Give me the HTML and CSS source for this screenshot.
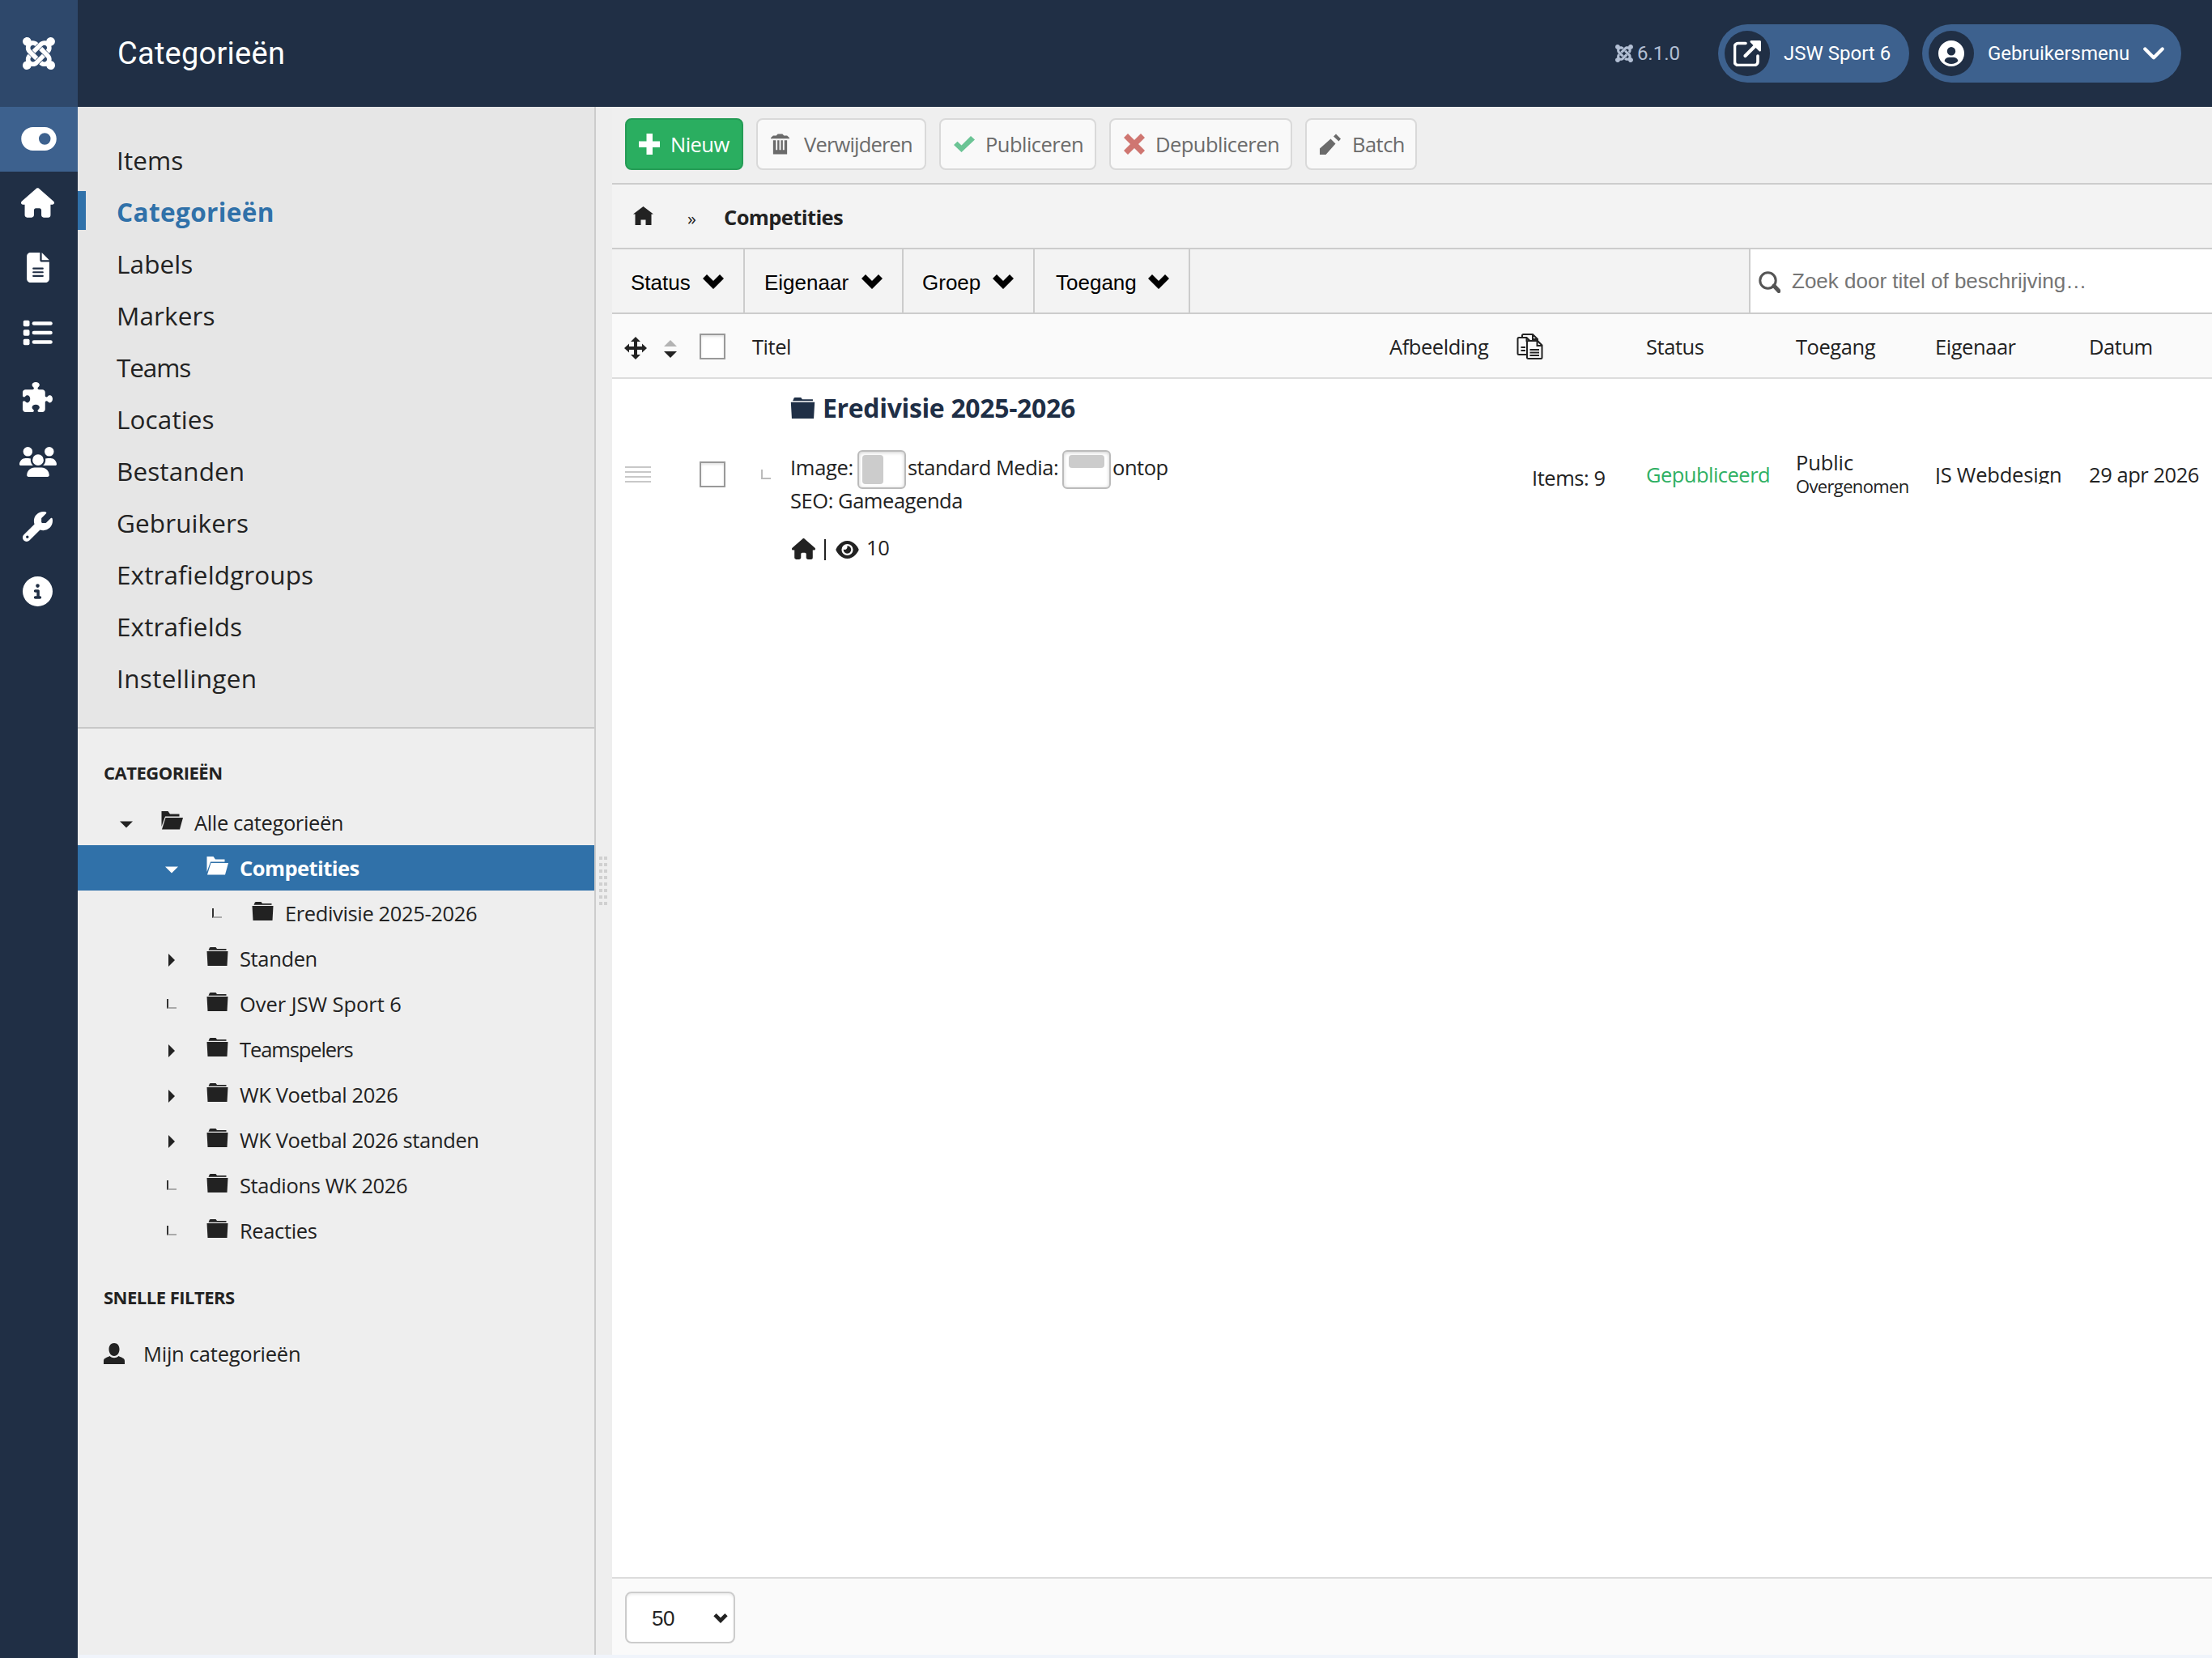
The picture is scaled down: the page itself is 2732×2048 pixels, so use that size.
FILE: index.html
```html
<!DOCTYPE html>
<html lang="nl">
<head>
<meta charset="utf-8">
<title>Categorieën</title>
<link rel="stylesheet" href="styles.css">
</head>
<body>
<svg class="sprite" aria-hidden="true">
  <symbol id="joomla" viewBox="0 32 448 448"><path d="M.6 92.1C.6 58.8 27.4 32 60.4 32c30 0 54.5 21.9 59.2 50.2 32.6-7.6 67.1 .6 96.5 30l-44.3 44.3c-20.5-20.5-42.6-16.3-55.4-3.5-14.3 14.3-14.3 37.9 0 52.2l99.5 99.5-44 44.3c-87.7-87.2-49.7-49.7-99.8-99.7-26.8-26.5-35-64.8-24.8-98.9C20.4 144.6 .6 120.7 .6 92.1zm129.5 116.4l44.3 44.3c10-10 89.7-89.7 99.7-99.8 14.3-14.3 37.6-14.3 51.9 0 12.8 12.8 17 35-3.5 55.4l44 44.3c31.2-31.2 38.5-67.6 28.9-101.2 29.2-4.1 51.9-29.2 51.9-59.5 0-33.2-26.8-60.1-59.8-60.1-30.3 0-55.4 22.5-59.5 51.6-33.8-9.9-71.7-1.5-98.3 25.1-18.3 19.1-71.1 71.5-99.6 99.9zm266.3 152.2c8.2-32.7-.9-68.5-26.3-93.9-11.8-12.2 5 4.7-99.5-99.7l-44.3 44.3 99.7 99.7c14.3 14.3 14.3 37.6 0 51.9-12.8 12.8-35 17-55.4-3.5l-44 44.3c27.6 30.2 68 38.8 102.7 28 5.5 27.4 29.7 48.1 58.9 48.1 33 0 59.8-26.8 59.8-60.1 0-30.2-22.5-55-51.6-59.1zm-84.3-53.1l-44-44.3c-87 86.4-50.4 50.4-99.7 99.8-14.3 14.3-37.6 14.3-51.9 0-13.1-13.4-16.9-35.3 3.2-55.4l-44-44.3c-30.2 30.2-38 65.2-29.5 98.3-26.7 6-46.2 29.9-46.2 58.2C0 453.2 26.8 480 59.8 480c28.6 0 52.5-19.8 58.6-46.7 32.7 8.2 68.5-.6 94.2-26 32.1-32 12.2-12.4 99.5-99.7z"/></symbol>
  <symbol id="toggle" viewBox="0 64 576 384"><path d="M192 64C86 64 0 150 0 256S86 448 192 448l192 0c106 0 192-86 192-192s-86-192-192-192L192 64zm192 96a96 96 0 1 1 0 192 96 96 0 1 1 0-192z"/></symbol>
  <symbol id="house" viewBox="0 0 576 512"><path d="M575.8 255.5c0 18-15 32.1-32 32.1l-32 0 .7 160.2c0 2.7-.2 5.4-.5 8.1l0 16.2c0 22.1-17.9 40-40 40l-16 0c-1.1 0-2.2 0-3.3-.1c-1.4 .1-2.8 .1-4.2 .1L416 512l-24 0c-22.1 0-40-17.9-40-40l0-24 0-64c0-17.7-14.3-32-32-32l-64 0c-17.7 0-32 14.3-32 32l0 64 0 24c0 22.1-17.9 40-40 40l-24 0-31.9 0c-1.5 0-3-.1-4.5-.2c-1.2 .1-2.4 .2-3.6 .2l-16 0c-22.1 0-40-17.9-40-40l0-112c0-.9 0-1.9 .1-2.8l0-69.7-32 0c-18 0-32-14-32-32.1c0-9 3-17 10-24L266.4 8c7-7 15-8 22-8s15 2 21 7L564.8 231.5c8 7 12 15 11 24z"/></symbol>
  <symbol id="file" viewBox="0 0 384 512"><path d="M64 0C28.7 0 0 28.7 0 64V448c0 35.3 28.7 64 64 64h256c35.3 0 64-28.7 64-64V160H256c-17.7 0-32-14.3-32-32V0zM256 0v128h128z"/><path class="cut" d="M112 272h160M112 336h160M112 400h160"/></symbol>
  <symbol id="list" viewBox="0 32 512 448"><rect x="8" y="42" width="108" height="104" rx="24"/><rect x="8" y="204" width="108" height="104" rx="24"/><rect x="8" y="366" width="108" height="104" rx="24"/><rect x="160" y="62" width="352" height="64" rx="32"/><rect x="160" y="224" width="352" height="64" rx="32"/><rect x="160" y="386" width="352" height="64" rx="32"/></symbol>
  <symbol id="puzzle" viewBox="0 0 512 512"><path d="M192 104.8c0-9.200-5.800-17.300-13.200-22.800C167.2 73.3 160 61.3 160 48c0-26.500 28.700-48 64-48s64 21.500 64 48c0 13.300-7.200 25.300-18.800 34c-7.400 5.500-13.200 13.600-13.200 22.800c0 12.800 10.400 23.200 23.200 23.200l56.800 0c26.500 0 48 21.500 48 48l0 56.800c0 12.800 10.400 23.200 23.200 23.200c9.200 0 17.300-5.800 22.800-13.200c8.700-11.600 20.700-18.800 34-18.800c26.500 0 48 28.700 48 64s-21.500 64-48 64c-13.300 0-25.300-7.200-34-18.800c-5.500-7.400-13.600-13.200-22.800-13.200c-12.800 0-23.200 10.400-23.200 23.200L384 464c0 26.500-21.500 48-48 48l-56.800 0c-12.800 0-23.200-10.400-23.200-23.200c0-9.200 5.800-17.300 13.200-22.800c11.600-8.700 18.800-20.700 18.800-34c0-26.500-28.700-48-64-48s-64 21.500-64 48c0 13.300 7.200 25.300 18.800 34c7.400 5.500 13.200 13.600 13.200 22.800c0 12.800-10.400 23.200-23.200 23.200L48 512c-26.500 0-48-21.500-48-48L0 343.200C0 330.400 10.400 320 23.200 320c9.200 0 17.300 5.800 22.800 13.200C54.700 344.800 66.700 352 80 352c26.500 0 48-28.700 48-64s-21.500-64-48-64c-13.300 0-25.300 7.200-34 18.800C40.500 250.200 32.400 256 23.200 256C10.400 256 0 245.600 0 232.800L0 176c0-26.500 21.500-48 48-48l120.800 0c12.800 0 23.200-10.400 23.200-23.200z"/></symbol>
  <symbol id="users" viewBox="0 0 640 512"><path d="M144 0a80 80 0 1 1 0 160A80 80 0 1 1 144 0zM512 0a80 80 0 1 1 0 160A80 80 0 1 1 512 0zM0 298.7C0 239.8 47.8 192 106.7 192l42.7 0c15.9 0 31 3.5 44.6 9.7c-1.3 7.2-1.9 14.7-1.9 22.3c0 38.2 16.8 72.5 43.3 96c-.2 0-.4 0-.7 0L21.3 320C9.6 320 0 310.4 0 298.7zM405.3 320c-.2 0-.4 0-.7 0c26.6-23.5 43.3-57.8 43.3-96c0-7.6-.7-15-1.9-22.3c13.6-6.3 28.7-9.7 44.6-9.7l42.7 0C592.2 192 640 239.8 640 298.7c0 11.8-9.6 21.3-21.3 21.3l-213.3 0zM224 224a96 96 0 1 1 192 0 96 96 0 1 1 -192 0zM128 485.3C128 411.7 187.7 352 261.3 352l117.3 0C452.3 352 512 411.7 512 485.3c0 14.7-11.9 26.7-26.7 26.7l-330.7 0c-14.7 0-26.7-11.9-26.7-26.7z"/></symbol>
  <symbol id="wrench" viewBox="0 0 512 512"><path d="M352 320c88.4 0 160-71.6 160-160c0-15.3-2.2-30.1-6.2-44.2c-3.1-10.8-16.4-13.2-24.3-5.3l-76.8 76.8c-3 3-7.1 4.7-11.3 4.7L336 192c-8.8 0-16-7.2-16-16l0-57.4c0-4.2 1.7-8.3 4.7-11.3l76.8-76.8c7.9-7.9 5.4-21.2-5.3-24.3C382.1 2.2 367.3 0 352 0C263.6 0 192 71.6 192 160c0 19.1 3.4 37.5 9.5 54.5L19.9 396.1C7.2 408.8 0 426.1 0 444.1C0 481.6 30.4 512 67.9 512c18 0 35.3-7.2 48-19.9L297.5 310.5c17 6.2 35.4 9.5 54.5 9.5zM80 408a24 24 0 1 1 0 48 24 24 0 1 1 0-48z"/></symbol>
  <symbol id="info" viewBox="0 0 512 512"><path d="M256 512A256 256 0 1 0 256 0a256 256 0 1 0 0 512zM216 336l24 0 0-64-24 0c-13.3 0-24-10.7-24-24s10.7-24 24-24l48 0c13.3 0 24 10.7 24 24l0 88 8 0c13.3 0 24 10.7 24 24s-10.7 24-24 24l-80 0c-13.3 0-24-10.7-24-24s10.7-24 24-24zm40-208a32 32 0 1 1 0 64 32 32 0 1 1 0-64z"/></symbol>
  <symbol id="eye" viewBox="0 32 576 448"><path d="M288 32c-80.800 0-145.500 36.800-192.600 80.600C48.600 156 17.300 208 2.500 243.700c-3.300 7.900-3.300 16.700 0 24.600C17.300 304 48.600 356 95.400 399.400C142.500 443.200 207.200 480 288 480s145.500-36.800 192.600-80.600c46.800-43.500 78.100-95.400 93-131.100c3.300-7.900 3.300-16.700 0-24.600c-14.900-35.700-46.200-87.700-93-131.100C433.500 68.800 368.800 32 288 32zM144 256a144 144 0 1 1 288 0 144 144 0 1 1 -288 0zm144-64c0 35.300-28.700 64-64 64c-7.100 0-13.900-1.200-20.300-3.300c-5.500-1.800-11.900 1.600-11.700 7.400c.3 6.900 1.300 13.800 3.200 20.700c13.700 51.200 66.400 81.600 117.600 67.900s81.600-66.400 67.900-117.600c-11.100-41.500-47.800-69.400-88.600-71.100c-5.800-.2-9.200 6.100-7.400 11.700c2.100 6.400 3.300 13.200 3.300 20.300z"/></symbol>
  <symbol id="external" viewBox="0 0 34 32"><path d="M15 3.500H5.500a4 4 0 0 0-4 4V26.500a4 4 0 0 0 4 4H26a4 4 0 0 0 4-4V19" fill="none" stroke="currentColor" stroke-width="3.600" stroke-linecap="round"/><path d="M14.500 19 29 4.500" fill="none" stroke="currentColor" stroke-width="4.200" stroke-linecap="round"/><path d="M22 0H32.500a1.500 1.500 0 0 1 1.500 1.500V12c0 1.500-1.500 2-2.500 1L21 2.500C20 1.500 20.500 0 22 0z"/></symbol>
  <symbol id="account" viewBox="0 0 32 32"><path fill-rule="evenodd" d="M16 0a16 16 0 1 1 0 32 16 16 0 1 1 0-32zM16 8a5 5 0 1 0 0 10.400 5 5 0 1 0 0-10.400zM7.500 25.200a11.500 11.500 0 0 0 17 0C23.500 22 21 20.800 18.500 20.800h-5C11 20.800 8.500 22 7.500 25.200z"/></symbol>
  <symbol id="angle" viewBox="0 0 26 16"><path d="M2.300 2.500 13 13.200 23.700 2.500" fill="none" stroke="currentColor" stroke-width="4.200" stroke-linecap="round" stroke-linejoin="round"/></symbol>
  <symbol id="chevron" viewBox="0 0 26 18"><path d="M0 5 5 0 13 8 21 0 26 5 13 18z"/></symbol>
  <symbol id="plus" viewBox="0 0 26 26"><path d="M9.500 0h7.500v9.500h9.500v7.500H17V26H9.500V17H0V9.500h9.500z"/></symbol>
  <symbol id="trash" viewBox="0 0 24 26"><path fill-rule="evenodd" d="M7 2 9 0h6l2 2h4l3 2.800V6H0V4.800L3 2zM3 8h3.500v12.500h2V8h2.500v12.500h2V8h2.500v12.500h2V8H21v18H3z"/></symbol>
  <symbol id="check" viewBox="0 0 26 20"><path d="M0 11 4.500 6.800 9.500 11.500 21 0 26 4.500 9.500 20z"/></symbol>
  <symbol id="cross" viewBox="0 0 26 26"><path d="M5 0 13 8 21 0 26 5 18 13 26 21 21 26 13 18 5 26 0 21 8 13 0 5z"/></symbol>
  <symbol id="pencil" viewBox="0 0 26 26"><path d="M0 26v-7.500L13.500 6.500 19.500 12.500 7.500 26zM17 3.500 20 .5 26 6.500 23.500 9.500z"/></symbol>
  <symbol id="home-solid" viewBox="0 0 25 23"><path d="M12.500 0 25 9.500h-2.500V23h-7v-6.500h-6V23h-7V9.500H0z"/></symbol>
  <symbol id="search" viewBox="0 0 27 27"><circle cx="11.500" cy="11.500" r="9.700" fill="none" stroke="currentColor" stroke-width="3"/><path d="M19 18 25 24.500" stroke="currentColor" stroke-width="5" stroke-linecap="round"/></symbol>
  <symbol id="move" viewBox="0 0 28 28"><path d="M14 0 20 6H16v6h6V8.500l6 5.500-6 5.500V16h-6v6h4l-6 6-6-6h4v-6H6v3.500L0 14 6 8.500V12h6V6H8z"/></symbol>
  <symbol id="sort" viewBox="0 0 16 22"><path d="M8 0 16 8H0z" fill="#b3b3b3"/><path d="M8 22 0 14h16z"/></symbol>
  <symbol id="copy" viewBox="0 0 33 32"><g fill="none" stroke="currentColor" stroke-width="2"><path d="M13 26H3Q1.500 26 1.500 24.500V6.500Q1.500 5 3 5H12.500l4 4M7 5V2.500Q7 1 8.500 1H20l6 6v2M12.500 5v5M20 1v6h6M14.500 9H26l5.500 5.500V29.500Q31.500 31 30 31H15Q13 31 13 29.500V10.500Q13 9 14.500 9zM25.500 9v6h6"/><path d="M5.500 17H11M5.500 21H11M16.500 20H28M16.500 23.500H28M16.500 27H28"/></g></symbol>
  <symbol id="folder" viewBox="0 0 26 23"><path d="M3 1.500Q3 0 4.500 0h6.500l1.500 2H24v1.800H2zM0 5h26l-1 18H1z"/></symbol>
  <symbol id="folder-open" viewBox="0 0 26 23"><path d="M0 0H8l2.500 3.500H22V6.500H4.500L0 19z"/><path d="M5 8H26.500L22.500 22.500H.5z"/></symbol>
  <symbol id="down" viewBox="0 0 16 8"><path d="M0 0h16L8 8z"/></symbol>
  <symbol id="right" viewBox="0 0 8 16"><path d="M0 0 8 8 0 16z"/></symbol>
  <symbol id="person" viewBox="0 0 26 26"><path d="M13 0c4 0 6.500 3 6.500 7.500S17 16 13 16 6.500 12 6.500 7.500 9 0 13 0zM0 26v-4c0-3.500 4-4 7.500-6 1.500 1.600 3.500 2.200 5.500 2.200s4-.6 5.500-2.200c3.500 2 7.500 2.500 7.500 6v4z"/></symbol>
</svg>

<div class="app">
  <nav class="rail">
    <a class="rail-logo"><svg class="i-logo"><use href="#joomla"/></svg></a>
    <a class="rail-item active"><svg class="i-toggle"><use href="#toggle"/></svg></a>
    <a class="rail-item"><svg class="i-house"><use href="#house"/></svg></a>
    <a class="rail-item"><svg class="i-file"><use href="#file"/></svg></a>
    <a class="rail-item"><svg class="i-list"><use href="#list"/></svg></a>
    <a class="rail-item"><svg class="i-sq"><use href="#puzzle"/></svg></a>
    <a class="rail-item"><svg class="i-users"><use href="#users"/></svg></a>
    <a class="rail-item"><svg class="i-sq"><use href="#wrench"/></svg></a>
    <a class="rail-item"><svg class="i-sq"><use href="#info"/></svg></a>
  </nav>

  <div class="page">
    <header class="header">
      <h1 class="page-title">Categorieën</h1>
      <div class="version"><svg><use href="#joomla"/></svg><span>6.1.0</span></div>
      <a class="pill pill-site"><span class="pill-icon"><svg class="i-ext"><use href="#external"/></svg></span><span>JSW Sport 6</span></a>
      <a class="pill pill-user"><span class="pill-icon"><svg class="i-acc"><use href="#account"/></svg></span><span>Gebruikersmenu</span><svg class="i-angle"><use href="#angle"/></svg></a>
    </header>

    <div class="body">
      <aside class="sidebar">
        <ul class="menu">
          <li>Items</li>
          <li class="current">Categorieën</li>
          <li>Labels</li>
          <li>Markers</li>
          <li class="kern">Teams</li>
          <li>Locaties</li>
          <li>Bestanden</li>
          <li>Gebruikers</li>
          <li>Extrafieldgroups</li>
          <li>Extrafields</li>
          <li class="wide">Instellingen</li>
        </ul>
        <h2 class="side-title">Categorieën</h2>
        <ul class="tree">
          <li class="l1"><span class="mark"><svg class="down"><use href="#down"/></svg></span><svg class="folder"><use href="#folder-open"/></svg><span>Alle categorieën</span></li>
          <li class="l2 selected"><span class="mark"><svg class="down"><use href="#down"/></svg></span><svg class="folder"><use href="#folder-open"/></svg><span>Competities</span></li>
          <li class="l3"><span class="mark"><i class="leaf"></i></span><svg class="folder"><use href="#folder"/></svg><span>Eredivisie 2025-2026</span></li>
          <li class="l2"><span class="mark"><svg class="right"><use href="#right"/></svg></span><svg class="folder"><use href="#folder"/></svg><span>Standen</span></li>
          <li class="l2"><span class="mark"><i class="leaf"></i></span><svg class="folder"><use href="#folder"/></svg><span class="loose">Over JSW Sport 6</span></li>
          <li class="l2"><span class="mark"><svg class="right"><use href="#right"/></svg></span><svg class="folder"><use href="#folder"/></svg><span class="kern">Teamspelers</span></li>
          <li class="l2"><span class="mark"><svg class="right"><use href="#right"/></svg></span><svg class="folder"><use href="#folder"/></svg><span>WK Voetbal 2026</span></li>
          <li class="l2"><span class="mark"><svg class="right"><use href="#right"/></svg></span><svg class="folder"><use href="#folder"/></svg><span>WK Voetbal 2026 standen</span></li>
          <li class="l2"><span class="mark"><i class="leaf"></i></span><svg class="folder"><use href="#folder"/></svg><span>Stadions WK 2026</span></li>
          <li class="l2"><span class="mark"><i class="leaf"></i></span><svg class="folder"><use href="#folder"/></svg><span>Reacties</span></li>
        </ul>
        <h2 class="side-title">Snelle filters</h2>
        <div class="quick"><svg><use href="#person"/></svg><span>Mijn categorieën</span></div>
      </aside>
      <div class="splitter"><div class="grip"></div></div>

      <main class="main">
        <div class="toolbar">
          <button class="btn btn-new"><svg class="s26"><use href="#plus"/></svg>Nieuw</button>
          <button class="btn btn-del"><svg class="i-trash"><use href="#trash"/></svg>Verwijderen</button>
          <button class="btn btn-pub"><svg class="i-check"><use href="#check"/></svg>Publiceren</button>
          <button class="btn btn-unpub"><svg class="s26"><use href="#cross"/></svg>Depubliceren</button>
          <button class="btn btn-batch"><svg class="s26"><use href="#pencil"/></svg>Batch</button>
        </div>
        <div class="crumbs"><svg><use href="#home-solid"/></svg><span class="sep">»</span><strong>Competities</strong></div>
        <div class="filters">
          <button class="filter w-status">Status<svg><use href="#chevron"/></svg></button>
          <button class="filter w-owner">Eigenaar<svg><use href="#chevron"/></svg></button>
          <button class="filter w-group">Groep<svg><use href="#chevron"/></svg></button>
          <button class="filter w-access">Toegang<svg><use href="#chevron"/></svg></button>
          <div class="search"><svg><use href="#search"/></svg><span>Zoek door titel of beschrijving…</span></div>
        </div>
        <div class="grid thead">
          <div class="order"><svg class="i-move"><use href="#move"/></svg><svg class="i-sort"><use href="#sort"/></svg></div>
          <div><span class="checkbox"></span></div>
          <div>Titel</div>
          <div>Afbeelding</div>
          <div><svg class="i-copy"><use href="#copy"/></svg></div>
          <div>Status</div>
          <div>Toegang</div>
          <div>Eigenaar</div>
          <div>Datum</div>
        </div>
        <div class="grid row">
          <div><span class="handle"></span></div>
          <div><span class="checkbox"></span></div>
          <div class="title-cell">
            <i class="leaf pale"></i>
            <div class="details">
              <div class="name"><svg><use href="#folder"/></svg><span>Eredivisie 2025-2026</span></div>
              <div class="layout-line"><span>Image:</span><i class="thumb"><b class="block side"></b></i><span>standard Media:</span><i class="thumb"><b class="block top"></b></i><span>ontop</span></div>
              <div class="seo">SEO: Gameagenda</div>
              <div class="stats"><svg class="st-home"><use href="#house"/></svg><i class="bar"></i><svg class="st-eye"><use href="#eye"/></svg><span>10</span></div>
            </div>
          </div>
          <div></div>
          <div class="count">Items: 9</div>
          <div class="published">Gepubliceerd</div>
          <div class="access"><span>Public</span><small>Overgenomen</small></div>
          <div><span class="owner">JS Webdesign</span></div>
          <div>29 apr 2026</div>
        </div>
        <div class="pager"><div class="select"><span>50</span><svg><use href="#chevron"/></svg></div></div>
      </main>
    </div>
  </div>
</div>
</body>
</html>
```
FILE: styles.css
```css
* { box-sizing: border-box; }

body {
  margin: 0;
  background: #f0f4fb;
  color: #222;
  font: 25.5px/36px "Open Sans", "Noto Sans", sans-serif;
  letter-spacing: -0.45px;
}

ul, h1, h2 { margin: 0; padding: 0; list-style: none; }
svg { fill: currentColor; flex: none; display: block; overflow: visible; }
.sprite { position: absolute; width: 0; height: 0; }

.app { display: flex; height: 2048px; overflow: hidden; }

/* icon rail */
.rail { width: 96px; flex: none; background: #202f45; color: #fff; }
.rail-logo { display: flex; height: 132px; align-items: center; justify-content: center; background: #2e486b; }
.rail-item { display: flex; height: 80px; align-items: center; justify-content: center; padding: 0 3px 3px 0; }
.rail-item.active { background: #3d618e; padding: 0 0 1px; }
.i-logo { width: 40px; height: 40px; }
.i-toggle { width: 44px; height: 29px; }
.i-house { width: 41px; height: 37px; }
.i-file { width: 28px; height: 37px; }
.i-list { width: 37px; height: 32px; }
.i-sq { width: 37px; height: 37px; }
.i-users { width: 46px; height: 37px; }
.cut { fill: none; stroke: #202f45; stroke-width: 30; stroke-linecap: round; }

.page { flex: 1; display: flex; flex-direction: column; min-width: 0; }

/* header */
.header {
  display: flex;
  height: 132px;
  align-items: center;
  padding: 0 38px 0 49px;
  background: #202f45;
  color: #fff;
  font: 24px/36px Roboto, sans-serif;
  letter-spacing: 0;
}
.page-title { flex: 1; padding-bottom: 1px; font-size: 38px; line-height: 48px; font-weight: 400; letter-spacing: .25px; }
.version { display: flex; align-items: center; gap: 5px; margin-right: 47px; color: #b2bfd4; }
.version svg { width: 22px; height: 22px; }
.pill { display: flex; align-items: center; height: 72px; border-radius: 36px; background: #3d618e; padding-left: 8px; gap: 17px; }
.pill-site { width: 236px; margin-right: 16px; }
.pill-user { width: 320px; }
.pill-icon { display: flex; width: 56px; height: 56px; border-radius: 50%; align-items: center; justify-content: center; background: #202f45; }
.i-ext { width: 34px; height: 32px; }
.i-acc { width: 32px; height: 32px; }
.i-angle { width: 26px; height: 16px; }

.body { flex: 1; display: flex; height: 1912px; padding-bottom: 4px; }

/* sidebar */
.sidebar { width: 640px; flex: none; background: #eee; border-right: 2px solid #ccc; }
.menu { height: 768px; padding-top: 34px; background: #e6e6e6; border-bottom: 2px solid #c8c8c8; font-size: 31.5px; letter-spacing: .1px; }
.menu li { height: 64px; line-height: 63px; padding-left: 48px; }
.menu .current {
  font-weight: 700;
  color: #3071a9;
  letter-spacing: .4px;
  background: linear-gradient(#3071a9, #3071a9) 0 6px / 10px 48px no-repeat;
}
.menu .kern { letter-spacing: -1.1px; }
.menu .wide { letter-spacing: .35px; }
.side-title { padding: 36px 0 0 32px; height: 88px; font-size: 22px; font-weight: 700; text-transform: uppercase; letter-spacing: -.5px; }
.tree li { display: flex; align-items: center; height: 56px; letter-spacing: -.37px; }
.tree .selected { background: #3071a9; color: #fff; font-weight: 700; letter-spacing: -.55px; }
.tree .loose { letter-spacing: -.05px; }
.tree .kern { letter-spacing: -1.1px; }
.l1 { padding-left: 48px; }
.l2 { padding-left: 104px; }
.l3 { padding-left: 160px; }
.mark { display: flex; width: 24px; margin-right: 31px; justify-content: center; }
.down { width: 16px; height: 9px; margin-top: 4px; }
.right { width: 8px; height: 16px; margin-top: 3px; }
.leaf { width: 12px; height: 12px; border-left: 2px solid #333; border-bottom: 2px solid #aaa; }
.tree .leaf { margin-bottom: 1px; }
.folder { width: 27px; height: 23px; margin: -5px 14px 0 0; }
.quick { display: flex; align-items: center; height: 72px; padding-left: 32px; gap: 23px; letter-spacing: -.24px; }
.quick svg { width: 26px; height: 26px; }
.splitter { width: 20px; flex: none; background: #eee; padding: 926px 0 0 4px; }
.grip {
  width: 10px;
  height: 60px;
  background: repeating-linear-gradient(#d0d0d0 0 4px, #eee 4px 8px);
  mask: linear-gradient(90deg, #000 4px, transparent 4px 6px, #000 6px);
}

/* main column */
.main { flex: 1; display: flex; flex-direction: column; min-width: 0; background: #fff; }
.toolbar { display: flex; height: 96px; padding: 14px 16px 0; gap: 16px; background: #efefef; border-bottom: 2px solid #ccc; }
.btn {
  display: flex;
  align-items: center;
  height: 64px;
  padding: 0 0 0 16px;
  border: 2px solid #d9d9d9;
  border-radius: 8px;
  background: #f9f9f9;
  color: #6b6b6b;
  font: inherit;
  letter-spacing: -.53px;
}
.btn svg { margin-right: 13px; }
.s26 { width: 26px; height: 26px; }
.btn-new { width: 146px; padding-left: 15px; background: #2aae60; border-color: #259c56; color: #fff; }
.btn-del { width: 210px; letter-spacing: -.82px; }
.btn-del svg { margin-right: 18px; }
.btn-pub { width: 194px; }
.btn-unpub { width: 226px; }
.btn-batch { width: 138px; }
.btn-batch svg { margin-right: 14px; }
.i-trash { width: 23px; height: 26px; }
.i-check { width: 26px; height: 20px; color: #6bc495; }
.btn-unpub svg { color: #cf7671; }

.crumbs { display: flex; align-items: center; height: 80px; padding: 2px 0 0 26px; background: #f3f3f3; border-bottom: 2px solid #ccc; }
.crumbs svg { width: 25px; height: 23px; margin-bottom: 3px; }
.crumbs .sep { width: 45px; margin: 2px 0 0 42px; font-size: 22px; }
.crumbs strong { letter-spacing: -.6px; }

.filters { display: flex; height: 80px; background: #f3f3f3; border-bottom: 2px solid #ccc; font: 26px/36px "Liberation Sans", Arial, sans-serif; letter-spacing: 0; }
.filter {
  display: flex;
  align-items: center;
  justify-content: space-between;
  padding: 3px 24px 0 23px;
  border: 0;
  border-right: 2px solid #ccc;
  background: none;
  color: #000;
  font: inherit;
}
.filter svg { width: 26px; height: 18px; margin-bottom: 2px; }
.w-status { width: 164px; }
.w-owner { width: 196px; padding-left: 24px; }
.w-group { width: 162px; }
.w-access { width: 192px; padding-left: 26px; }
.search { display: flex; align-items: center; width: 572px; margin-left: auto; padding: 0 0 0 10px; gap: 14px; border-left: 2px solid #ccc; background: #fff; color: #757575; }
.search svg { width: 27px; height: 27px; color: #555; margin-top: 2px; }

.grid { display: grid; grid-template-columns: 92px 64px 788px 156px 161px 185px 172px 190px 1fr; align-items: center; padding-left: 16px; }
.thead { height: 80px; padding-top: 2px; background: #fafafa; border-bottom: 2px solid #dcdcdc; }
.thead div:nth-child(3) { padding-left: 1px; }
.order { display: flex; align-items: center; gap: 21px; }
.i-move { width: 28px; height: 28px; margin: 4px 0 0 -1px; }
.i-sort { width: 16px; height: 22px; margin-top: 6px; }
.i-copy { width: 33px; height: 32px; margin-left: 1px; }
.checkbox { display: block; width: 32px; height: 32px; border: 2px solid #999; background: #fff; box-shadow: inset 0 2px 3px #e4e4e4; }
.row { height: 236px; white-space: nowrap; }
.handle { display: block; width: 32px; height: 20px; background: repeating-linear-gradient(#c8c8c8 0 2px, transparent 2px 6px); }
.title-cell { display: flex; align-items: center; gap: 24px; padding-left: 12px; }
.leaf.pale { border-color: #bbb; }
.details { height: 236px; padding-top: 13px; }
.name { display: flex; align-items: center; height: 46px; color: #1f2f46; font-size: 32px; font-weight: 700; letter-spacing: -.35px; }
.name svg { width: 31px; height: 26px; margin-right: 9px; }
.layout-line { display: flex; align-items: center; height: 54px; margin-top: 23px; letter-spacing: -.5px; }
.layout-line span:first-child { letter-spacing: -.3px; }
.thumb { width: 60px; height: 48px; margin: 6px 2px 0 5px; padding: 4px; border: 2px solid #bbb; border-radius: 6px; background: #fff; box-shadow: inset 0 1px 4px #ccc; }
.block { display: block; background: #ccc; border-radius: 4px; }
.block.side { width: 26px; height: 36px; }
.block.top { width: 44px; height: 16px; margin: 0 2px; }
.seo { height: 28px; line-height: 28px; }
.stats { display: flex; align-items: center; height: 48px; margin-top: 20px; padding-left: 2px; }
.st-home { width: 29px; height: 26px; margin-top: 4px; }
.bar { width: 2px; height: 26px; margin: 5px 12px 0 11px; background: #222; }
.st-eye { width: 29px; height: 22px; margin: 5px 9px 0 0; }
.count { padding: 8px 0 0 20px; }
.published { color: #2fb063; letter-spacing: -.53px; }
.access { display: flex; flex-direction: column; padding-bottom: 5px; }
.access span { line-height: 32px; letter-spacing: -.1px; }
.access small { font-size: 22px; line-height: 26px; letter-spacing: -.65px; }
.owner { display: block; height: 30px; margin-top: -6px; line-height: 36px; overflow: hidden; letter-spacing: -.2px; }

.pager { margin-top: auto; height: 96px; padding: 16px; background: #fafafa; border-top: 2px solid #dcdcdc; }
.select {
  display: flex;
  align-items: center;
  justify-content: space-between;
  width: 136px;
  height: 64px;
  padding: 1px 7px 0 31px;
  border: 2px solid #ccc;
  border-radius: 8px;
  background: #fff;
  box-shadow: inset 0 2px 3px #eee;
  font: 26px/36px "Liberation Sans", Arial, sans-serif;
}
.select svg { width: 18px; height: 12px; }
```
